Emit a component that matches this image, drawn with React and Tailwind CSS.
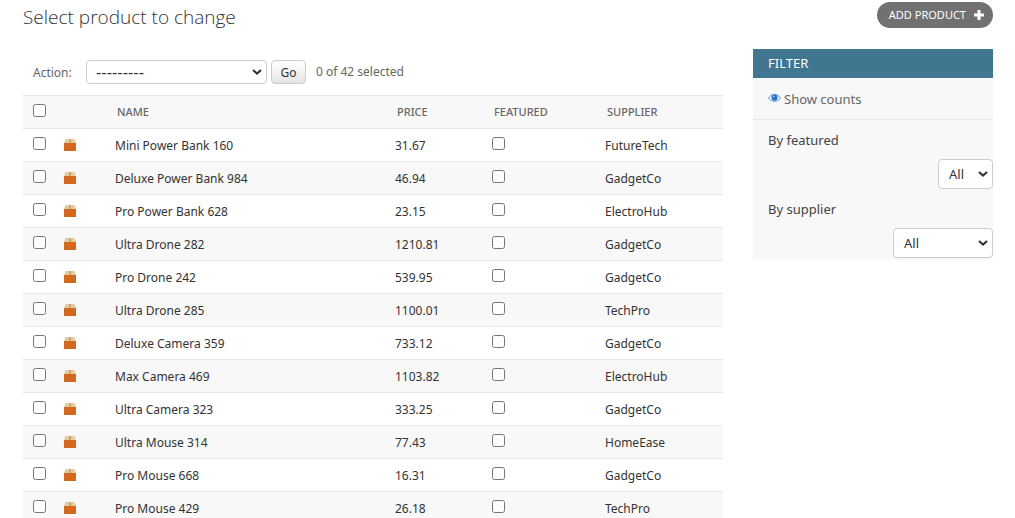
import React from "react";

const products = [
  ["Mini Power Bank 160", "31.67", "FutureTech"],
  ["Deluxe Power Bank 984", "46.94", "GadgetCo"],
  ["Pro Power Bank 628", "23.15", "ElectroHub"],
  ["Ultra Drone 282", "1210.81", "GadgetCo"],
  ["Pro Drone 242", "539.95", "GadgetCo"],
  ["Ultra Drone 285", "1100.01", "TechPro"],
  ["Deluxe Camera 359", "733.12", "GadgetCo"],
  ["Max Camera 469", "1103.82", "ElectroHub"],
  ["Ultra Camera 323", "333.25", "GadgetCo"],
  ["Ultra Mouse 314", "77.43", "HomeEase"],
  ["Pro Mouse 668", "16.31", "GadgetCo"],
  ["Pro Mouse 429", "26.18", "TechPro"],
];

function BoxIcon() {
  return (
    <svg width="12" height="12" viewBox="0 0 12 12" aria-hidden="true">
      <path d="M1.500 0h9L12 4H0z" fill="#e0cda4" />
      <path d="M0 4h12v8H0z" fill="#d2691e" />
      <path d="M5.500 0h1v4h-1z" fill="#c87a3c" />
    </svg>
  );
}

function EyeIcon() {
  return (
    <svg className="mb-[3px]" width="13" height="10" viewBox="0 0 13 10" aria-hidden="true">
      <path d="M.5 5C3.500.2 9.500.2 12.500 5 9.500 9.400 3.500 9.400.5 5z" fill="#fff" stroke="#5b93d6" strokeWidth="1" />
      <circle cx="6.500" cy="4.600" r="3.100" fill="#2b70bf" />
      <circle cx="5.600" cy="3.500" r=".9" fill="#9dc0e8" />
    </svg>
  );
}

function Select({ id, value, className }) {
  return (
    <div className="relative inline-flex">
      <select
        id={id}
        className={"appearance-none rounded border border-[#ccc] bg-white text-[#333] " + className}
      >
        <option>{value}</option>
      </select>
      <svg
        className="pointer-events-none absolute right-[5px] top-1/2 -translate-y-1/2"
        width="10"
        height="8"
        viewBox="0 0 10 8"
        aria-hidden="true"
      >
        <path d="M1 2l4 3.500 4-3.500" fill="none" stroke="#333" strokeWidth="2.200" />
      </svg>
    </div>
  );
}

function Check({ label }) {
  return <input type="checkbox" aria-label={label} className="block size-[13px]" />;
}

export default function App() {
  return (
    <main className="h-screen overflow-hidden bg-white pl-[23px] pr-[22px] font-['Noto_Sans',sans-serif] text-[13px] text-[#333]">
      <header className="flex items-start justify-between pt-[2px]">
        <h1 className="pt-[1px] font-['Open_Sans',sans-serif] text-[19px] font-light leading-[28px] text-[#333]">
          Select product to change
        </h1>
        <a
          href="#add"
          className="flex h-[26px] items-center gap-2 rounded-full bg-[#717171] pl-3 pr-[9px] text-[11px] text-white"
        >
          ADD PRODUCT
          <svg width="10" height="10" viewBox="0 0 10 10" aria-hidden="true">
            <path d="M5 0v10M0 5h10" stroke="#fff" strokeWidth="3" />
          </svg>
        </a>
      </header>

      <div className="flex items-start gap-[30px] pt-[18px]">
        <section className="min-w-0 flex-1">
          <form className="flex h-[46px] items-center pl-[10px] text-[#666]">
            <label htmlFor="action" className="w-[53px] pt-[2px] text-[12px]">Action:</label>
            <Select
              id="action"
              value="---------"
              className="h-[24px] w-[181px] pl-[9px] font-['Liberation_Sans',sans-serif] text-[16px]"
            />
            <button
              type="button"
              className="ml-1 h-[24px] w-[35px] rounded border border-[#ccc] bg-linear-to-b from-white to-[#e5e5e5] pt-[2px] text-[12px] leading-[20px] text-[#333]"
            >
              Go
            </button>
            <span className="ml-[10px] text-[12px]">0 of 42 selected</span>
          </form>
          <table className="w-full table-fixed border-collapse text-left">
            <colgroup>
              <col className="w-[33px]" />
              <col className="w-[51px]" />
              <col className="w-[40%]" />
              <col className="w-[97px]" />
              <col className="w-[113px]" />
              <col />
            </colgroup>
            <thead>
              <tr className="h-[33px] border-y border-[#e8e8e8] bg-[#f8f8f8] text-[11px] text-[#666]">
                <th className="pb-[3px] pl-[10px]"><Check label="Select all products" /></th>
                <th aria-label="Icon" />
                <th className="pl-[10px] font-medium">NAME</th>
                <th className="pl-[10px] font-medium">PRICE</th>
                <th className="pl-[10px] font-medium">FEATURED</th>
                <th className="pl-[10px] font-medium">SUPPLIER</th>
              </tr>
            </thead>
            <tbody>
              {products.map(([name, price, supplier]) => (
                <tr key={name} className="h-[33px] border-b border-[#e8e8e8] even:bg-[#f8f8f8]">
                  <td className="pb-[3px] pl-[10px]"><Check label={"Select " + name} /></td>
                  <td className="pl-2"><BoxIcon /></td>
                  <td className="pl-2 pt-[2px] text-[12px]">{name}</td>
                  <td className="pl-2 pt-[2px] text-[12px]">{price}</td>
                  <td className="pb-[3px] pl-2"><Check label={name + " featured"} /></td>
                  <td className="pl-2 pt-[2px] text-[12px]">{supplier}</td>
                </tr>
              ))}
            </tbody>
          </table>
        </section>

        <aside className="w-[240px] shrink-0 bg-[#f8f8f8]">
          <h2 className="flex h-[29px] items-center bg-[#417690] pl-[15px] text-[13px] text-white">FILTER</h2>
          <div className="flex h-[42px] items-center border-b border-[#e8e8e8] pl-[15px] pt-[2px]">
            <a href="#counts" className="flex items-center gap-[3px] text-[#666]">
              <EyeIcon />
              Show counts
            </a>
          </div>
          <div className="flex flex-col pt-[10px] text-[#444]">
            <label htmlFor="featured" className="pl-[15px] leading-[20px]">By featured</label>
            <div className="mb-[10px] mt-[9px] flex justify-end">
              <Select id="featured" value="All" className="h-[30px] w-[55px] pl-[10px] pt-[2px]" />
            </div>
            <label htmlFor="supplier" className="pl-[15px] leading-[20px]">By supplier</label>
            <div className="mb-[2px] mt-[9px] flex justify-end">
              <Select id="supplier" value="All" className="h-[30px] w-[100px] pl-[10px] pt-[2px]" />
            </div>
          </div>
        </aside>
      </div>
    </main>
  );
}
